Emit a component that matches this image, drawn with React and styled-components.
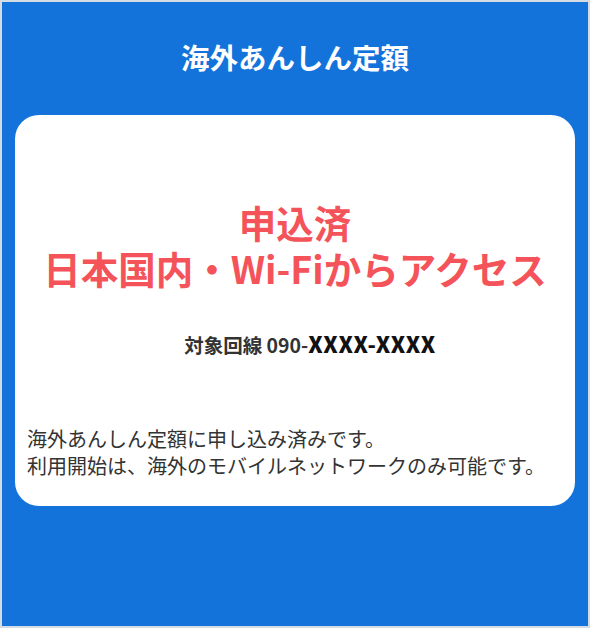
import React from "react";
import styled, { createGlobalStyle } from "styled-components";

const Global = createGlobalStyle`
  html, body { margin: 0; padding: 0; }
  body { font-family: "Noto Sans CJK JP", "Noto Sans", sans-serif; }
  * { box-sizing: border-box; }
`;

const Frame = styled.div`
  width: 590px;
  height: 628px;
  border: 2px solid #d3dbe3;
  background: #1473db;
  display: flex;
  flex-direction: column;
`;

const Header = styled.header`
  height: 113px;
  display: flex;
  align-items: center;
  justify-content: center;
  padding-bottom: 2px;
`;

const Title = styled.h1`
  margin: 0;
  color: #ffffff;
  font-size: 28.5px;
  font-weight: 700;
  line-height: 1.2;
`;

const Card = styled.section`
  margin: 0 13px;
  height: 391px;
  background: #ffffff;
  border-radius: 24px;
  padding: 84px 12px 0 12px;
  display: flex;
  flex-direction: column;
`;

const StatusLine = styled.div`
  color: #f5535a;
  font-size: 37.5px;
  font-weight: 700;
  line-height: 46px;
  height: 46px;
  text-align: center;
  white-space: nowrap;
`;

const Line = styled.div`
  margin-top: 40px;
  text-align: center;
  padding-left: 30px;
  font-size: 19.5px;
  font-weight: 700;
  line-height: 24px;
  color: #333333;
`;

const Num = styled.span`
  color: #111111;
  font-size: 22px;
  font-weight: 800;
  letter-spacing: 0.6px;
`;

const Body = styled.p`
  margin: 68px 0 0 0;
  font-size: 20px;
  line-height: 27px;
  color: #333333;
`;

export default function App() {
  return (
    <>
      <Global />
      <Frame>
        <Header>
          <Title>海外あんしん定額</Title>
        </Header>
        <Card>
          <StatusLine>申込済</StatusLine>
          <StatusLine>日本国内・Wi-Fiからアクセス</StatusLine>
          <Line>
            対象回線 090-<Num>XXXX-XXXX</Num>
          </Line>
          <Body>
            海外あんしん定額に申し込み済みです。
            <br />
            利用開始は、海外のモバイルネットワークのみ可能です。
          </Body>
        </Card>
      </Frame>
    </>
  );
}
